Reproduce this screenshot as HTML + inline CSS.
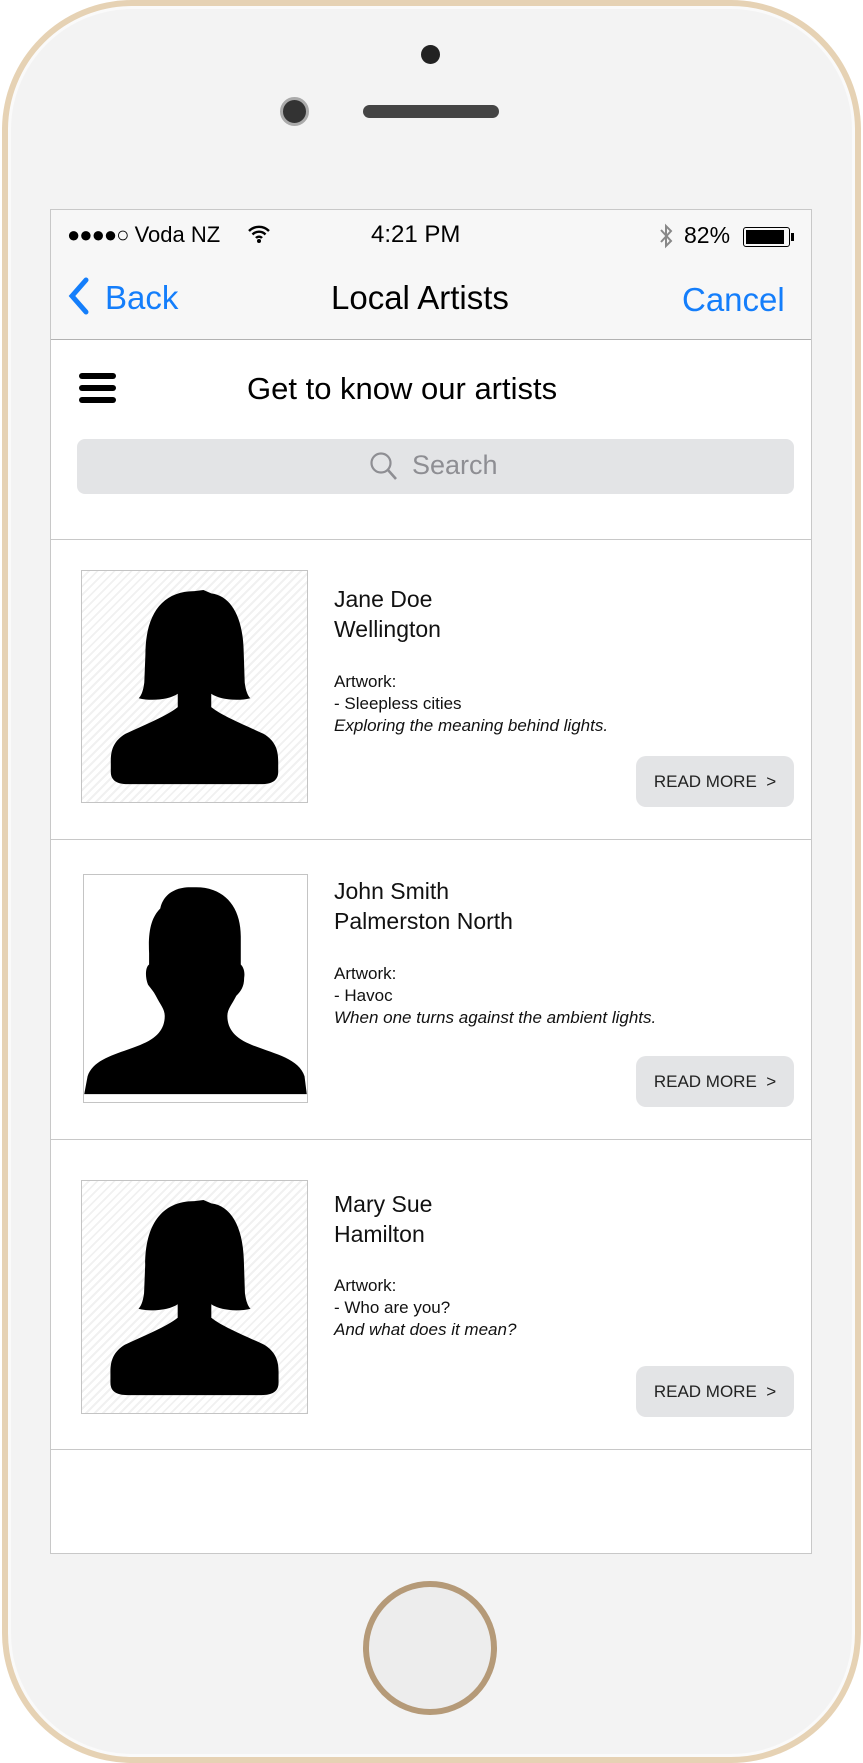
<!DOCTYPE html>
<html><head><meta charset="utf-8"><style>
*{margin:0;padding:0;box-sizing:border-box}
body{width:863px;height:1763px;background:#fff;font-family:"Liberation Sans",sans-serif;position:relative;overflow:hidden}
.abs{position:absolute}
.phone{left:2px;top:0;width:859px;height:1763px;border-radius:130px;background:#e6d2b4;}
.phone2{left:8px;top:6px;width:847px;height:1751px;border-radius:124px;background:#f3f3f3;border:3px solid #fafafa}
.screen{left:50px;top:209px;width:762px;height:1345px;background:#fff;border:1px solid #c8c8c8;overflow:hidden}
.nav{left:0;top:0;width:760px;height:130px;background:#f7f7f7;border-bottom:1px solid #b2b2b2}
.t{position:absolute;white-space:nowrap}
.div{position:absolute;left:0;width:760px;height:1px;background:#c8c8c8}
.img{position:absolute;border:1px solid #c4c4c4;background:repeating-linear-gradient(135deg,#fff 0 4px,#f1f1f1 4px 6px)}
.name{font-size:23px;color:#111;line-height:30px}
.art{font-size:17px;color:#111;line-height:22px}
.btn{position:absolute;left:585px;width:158px;height:51px;background:#e3e4e6;border-radius:10px;font-size:17px;color:#222;line-height:51px;text-align:center}
</style></head><body>
<div class="abs phone"></div>
<div class="abs phone2"></div>
<div class="abs" style="left:421px;top:45px;width:19px;height:19px;border-radius:50%;background:#222"></div>
<div class="abs" style="left:280px;top:97px;width:29px;height:29px;border-radius:50%;background:#333;border:3px solid #aaa"></div>
<div class="abs" style="left:363px;top:105px;width:136px;height:13px;border-radius:7px;background:#444"></div>
<div class="abs" style="left:363px;top:1581px;width:134px;height:134px;border-radius:50%;border:6px solid #b59a78;background:#ededed"></div>

<div class="abs screen">
 <div class="abs nav"></div>
 <div class="t" style="left:16px;top:12px;font-size:22px;color:#000"><span style="letter-spacing:-1px">●●●●○</span> Voda NZ</div>
 <svg class="abs" style="left:196px;top:14px" width="24" height="20" viewBox="0 0 24 20"><path d="M2 7a14 14 0 0 1 20 0M5.5 10.5a9 9 0 0 1 13 0M9 14a4 4 0 0 1 6 0" stroke="#000" stroke-width="2.4" fill="none"/><circle cx="12" cy="17" r="2" fill="#000"/></svg>
 <div class="t" style="left:320px;top:11px;font-size:24px;color:#000">4:21 PM</div>
 <svg class="abs" style="left:608px;top:12px" width="14" height="28" viewBox="0 0 14 28"><path d="M2 8 L12 19 L7 24 L7 4 L12 9 L2 20" stroke="#888" stroke-width="2" fill="none"/></svg>
 <div class="t" style="left:633px;top:12px;font-size:23px;color:#000">82%</div>
 <div class="abs" style="left:692px;top:17px;width:47px;height:20px;border:1.5px solid #000;border-radius:3px;padding:2px"><div style="width:38px;height:100%;background:#000"></div></div>
 <div class="abs" style="left:740px;top:23px;width:3px;height:8px;background:#000"></div>
 <svg class="abs" style="left:15px;top:66px" width="26" height="40" viewBox="0 0 26 40"><path d="M20 4 L6 20 L20 36" stroke="#147efb" stroke-width="5" fill="none" stroke-linecap="round"/></svg>
 <div class="t" style="left:54px;top:69px;font-size:33px;color:#147efb">Back</div>
 <div class="t" style="left:280px;top:69px;font-size:33px;color:#000">Local Artists</div>
 <div class="t" style="left:631px;top:71px;font-size:33px;color:#147efb">Cancel</div>

 <div class="abs" style="left:28px;top:163px;width:37px;height:6px;border-radius:3px;background:#000"></div>
 <div class="abs" style="left:28px;top:175px;width:37px;height:6px;border-radius:3px;background:#000"></div>
 <div class="abs" style="left:28px;top:187px;width:37px;height:6px;border-radius:3px;background:#000"></div>
 <div class="t" style="left:196px;top:161px;font-size:31px;color:#000">Get to know our artists</div>
 <div class="abs" style="left:26px;top:229px;width:717px;height:55px;background:#e3e4e6;border-radius:8px"></div>
 <svg class="abs" style="left:318px;top:241px" width="30" height="32" viewBox="0 0 30 32"><circle cx="12" cy="12" r="9.5" stroke="#8e8e93" stroke-width="2.2" fill="none"/><path d="M19 19 L27 28" stroke="#8e8e93" stroke-width="2.6"/></svg>
 <div class="t" style="left:361px;top:240px;font-size:27px;color:#8e8e93">Search</div>
 <div class="div" style="top:329px"></div>

 <div class="img" style="left:30px;top:360px;width:227px;height:233px">
  <svg width="225" height="231" viewBox="0 0 200 207"><path d="M100 18 C70 18 56 40 56 75 L55 100 C54 108 52 112 50 114 C62 117 78 115 85 110 L85 122 C75 130 55 138 38 146 C28 152 25 160 25 170 L25 180 C25 188 31 191 40 191 L160 191 C169 191 175 188 175 180 L175 170 C175 160 172 152 162 146 C145 138 125 130 115 122 L115 110 C122 115 138 117 150 114 C148 112 146 108 145 100 L144 70 C143 40 132 22 115 20 L108 17 Z" fill="#000"/></svg>
 </div>
 <div class="t name" style="left:283px;top:374px">Jane Doe<br>Wellington</div>
 <div class="t art" style="left:283px;top:461px">Artwork:<br>- Sleepless cities<br><i>Exploring the meaning behind lights.</i></div>
 <div class="btn" style="top:546px">READ MORE &nbsp;&gt;</div>
 <div class="div" style="top:629px"></div>

 <div class="img" style="left:32px;top:664px;width:225px;height:229px;background:#fff">
  <svg width="223" height="227" viewBox="0 0 199 203"><path d="M95 11 C78 11 70 20 68 30 C60 38 57 50 58 70 L58 80 C55 82 54 90 57 98 C60 102 62 104 64 108 C68 116 72 120 72 126 C72 138 65 146 50 152 C30 160 8 164 3 180 L0 196 L199 196 L197 180 C192 164 170 160 150 152 C135 146 128 138 128 126 C128 120 132 116 136 108 C140 104 143 100 143 92 C144 86 142 82 140 80 L140 55 C140 28 125 11 100 11 Z" fill="#000"/></svg>
 </div>
 <div class="t name" style="left:283px;top:666px">John Smith<br>Palmerston North</div>
 <div class="t art" style="left:283px;top:753px">Artwork:<br>- Havoc<br><i>When one turns against the ambient lights.</i></div>
 <div class="btn" style="top:846px">READ MORE &nbsp;&gt;</div>
 <div class="div" style="top:929px"></div>

 <div class="img" style="left:30px;top:970px;width:227px;height:234px">
  <svg width="225" height="232" viewBox="0 0 200 207"><path d="M100 18 C70 18 56 40 56 75 L55 100 C54 108 52 112 50 114 C62 117 78 115 85 110 L85 122 C75 130 55 138 38 146 C28 152 25 160 25 170 L25 180 C25 188 31 191 40 191 L160 191 C169 191 175 188 175 180 L175 170 C175 160 172 152 162 146 C145 138 125 130 115 122 L115 110 C122 115 138 117 150 114 C148 112 146 108 145 100 L144 70 C143 40 132 22 115 20 L108 17 Z" fill="#000"/></svg>
 </div>
 <div class="t name" style="left:283px;top:979px">Mary Sue<br>Hamilton</div>
 <div class="t art" style="left:283px;top:1065px">Artwork:<br>- Who are you?<br><i>And what does it mean?</i></div>
 <div class="btn" style="top:1156px">READ MORE &nbsp;&gt;</div>
 <div class="div" style="top:1239px"></div>
</div>
</body></html>
